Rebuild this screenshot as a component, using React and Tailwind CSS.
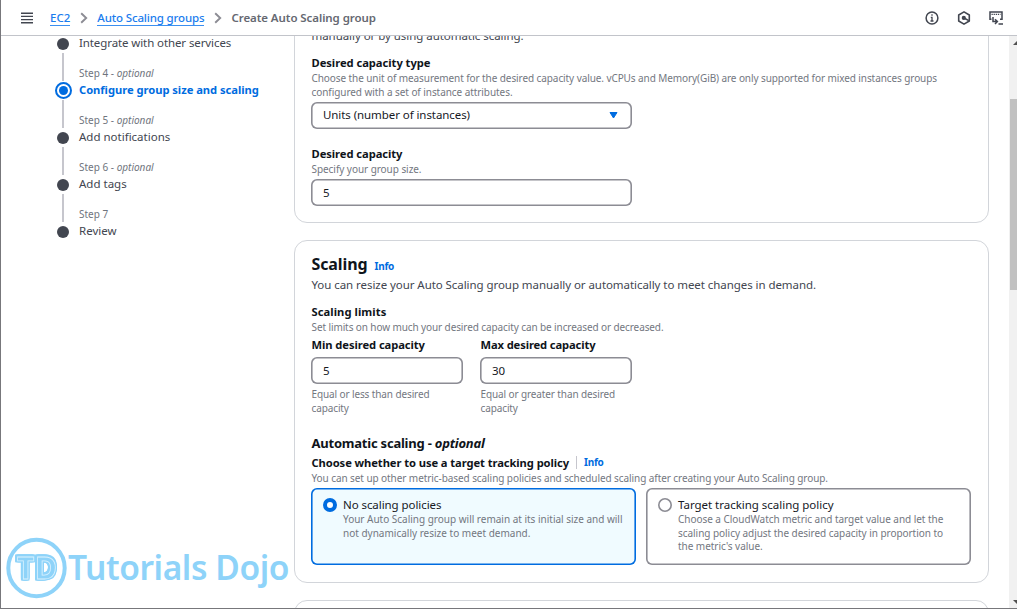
const strong = "text-[11.2px] font-bold leading-[17px] whitespace-nowrap text-[#0f141a]";
const body = "text-[11.5px] leading-[17px] whitespace-nowrap";
const hint = "text-[10px] leading-[14px] whitespace-nowrap text-[#73777f]";
const field =
  "-ml-[0.5px] flex h-[27px] items-center rounded-[6px] shadow-[inset_0_0_0_1.6px_#8c8c94] bg-white px-[12px] text-[11.5px] tracking-[-0.075px] text-[#16191f]";
const card = "rounded-[13px] border border-[#d2d5da] bg-white";

function Chevron() {
  return (
    <svg className="h-[12px] w-[8px]" viewBox="0 0 8 12" fill="none" stroke="#8c8c94" strokeWidth="1.9">
      <path d="M1.2 1.2 6.2 6l-5 4.8" />
    </svg>
  );
}

function Header() {
  return (
    <header className="flex h-[36px] shrink-0 items-center border-b border-[#c2c4ca] bg-white pr-[14px] pl-[20px]">
      <svg className="h-[12px] w-[12px]" viewBox="0 0 12 12" stroke="#424650" strokeWidth="1.4">
        <path d="M0 1.2h12M0 4.4h12M0 7.6h12M0 10.8h12" />
      </svg>
      <nav className="ml-[17px] flex items-center text-[11.5px] leading-[15px] whitespace-nowrap">
        <a className="border-b border-[#3b8ff0] font-medium text-[#1a7cee]">EC2</a>
        <span className="mr-[9px] ml-[10px]"><Chevron /></span>
        <a className="border-b border-[#3b8ff0] font-medium tracking-[-0.15px] text-[#1a7cee]">Auto Scaling groups</a>
        <span className="mr-[9px] ml-[10px]"><Chevron /></span>
        <span className="font-semibold tracking-[-0.07px] text-[#656871]">Create Auto Scaling group</span>
      </nav>
      <div className="ml-auto flex items-center gap-[18px]">
        <svg className="h-[14px] w-[14px]" viewBox="0 0 14 14" fill="none" stroke="#424650" strokeWidth="1.5">
          <circle cx="7" cy="7" r="5.9" />
          <path d="M7 3.3v1.5M5.8 6.4H7v3.4M5.5 10h3" strokeWidth="1.3" />
        </svg>
        <svg className="h-[14px] w-[14px]" viewBox="0 0 14 14" fill="none" stroke="#424650" strokeWidth="1.6">
          <path d="M7 .9 12.3 4v6L7 13.1 1.7 10V4z" strokeLinejoin="round" />
          <circle cx="6.8" cy="6.9" r="1.3" fill="#424650" />
          <path d="m7.5 7.3 4.3 2.3" />
        </svg>
        <svg className="h-[14px] w-[14px]" viewBox="0 0 14 14" fill="none" stroke="#424650" strokeWidth="1.5">
          <path d="M2.5 8.3H1V1h12v7.3h-2" />
          <path d="M2.5 3.4h9" strokeDasharray="1.3 .8" strokeWidth="1.2" />
          <path d="M4 6v4.6h4M6 8.2l2.4 2.4L6 13M9.5 13H14" />
        </svg>
      </div>
    </header>
  );
}

function Step({ label, optional, title, active, last, titleClass }) {
  return (
    <li className="flex h-[47px] gap-[6.5px]">
      <div className="flex w-[19px] shrink-0 flex-col items-center">
        <span className="h-[15px] w-[1.5px] bg-[#c6c6cd]" />
        <span className="flex h-[19px] w-[19px] items-center justify-center">
          {active ? (
            <span className="flex h-[17px] w-[17px] items-center justify-center rounded-full border-2 border-[#006ce0]">
              <span className="h-[9px] w-[9px] rounded-full bg-[#006ce0]" />
            </span>
          ) : (
            <span className="h-[12px] w-[12px] rounded-full bg-[#424650]" />
          )}
        </span>
        {!last && <span className="w-[1.5px] flex-1 bg-[#c6c6cd]" />}
      </div>
      <div>
        <div className="text-[10px] leading-[14px] whitespace-nowrap text-[#6f747d]">
          {label}
          {optional && <> - <em>optional</em></>}
        </div>
        <div className={"mt-[1px] leading-[17px] whitespace-nowrap " + titleClass + (active ? " text-[11.2px] font-bold text-[#006ce0]" : " text-[11.5px] text-[#424650]")}>
          {title}
        </div>
      </div>
    </li>
  );
}

function Steps() {
  return (
    <ol className="-mt-[17px] w-[240px] pl-[52.5px]">
      <Step label="Step 3" optional title="Integrate with other services" titleClass="tracking-[-0.1px]" />
      <Step label="Step 4" optional title="Configure group size and scaling" active titleClass="tracking-[-0.04px]" />
      <Step label="Step 5" optional title="Add notifications" titleClass="tracking-normal" />
      <Step label="Step 6" optional title="Add tags" titleClass="tracking-normal" />
      <Step label="Step 7" title="Review" last titleClass="tracking-normal" />
    </ol>
  );
}

function GroupSizeCard() {
  return (
    <section className={card + " -mt-[15px] px-[16.5px] pt-[5px] pb-[16px]"}>
      <p className={body + " tracking-[-0.05px] text-[#424650]"}>manually or by using automatic scaling.</p>
      <h3 className={strong + " mt-[10px] tracking-[-0.04px]"}>Desired capacity type</h3>
      <p className={hint + " tracking-[-0.087px]"}>
        Choose the unit of measurement for the desired capacity value. vCPUs and Memory(GiB) are only supported for mixed instances groups
      </p>
      <p className={hint + " tracking-[-0.068px]"}>configured with a set of instance attributes.</p>
      <div className={field + " mt-[3px] w-[321px] justify-between pb-[2px]"}>
        Units (number of instances)
        <svg className="mr-[2px] h-[7px] w-[9px] translate-y-px" viewBox="0 0 9 7">
          <path d="M1 .5h7L4.5 6z" fill="#006ce0" stroke="#006ce0" strokeLinejoin="round" />
        </svg>
      </div>
      <h3 className={strong + " mt-[16px] tracking-[-0.06px]"}>Desired capacity</h3>
      <p className={hint + " tracking-[-0.055px]"}>Specify your group size.</p>
      <div className={field + " mt-[3px] w-[321px]"}>5</div>
    </section>
  );
}

function Limit({ label, labelClass, value, lines }) {
  return (
    <div className="w-[152px]">
      <h4 className={strong + " " + labelClass}>{label}</h4>
      <div className={field + " mt-[4px] w-[152px]"}>{value}</div>
      <p className={hint + " mt-[3px] tracking-[-0.113px]"}>
        {lines[0]}
        <br />
        {lines[1]}
      </p>
    </div>
  );
}

function Tile({ title, titleClass, selected, children }) {
  return (
    <div
      className={
        "flex h-[77px] w-[325px] gap-[6.5px] rounded-[6px] pt-[8px] pl-[11.5px] " +
        (selected ? "bg-[#f0fbff] shadow-[inset_0_0_0_1.6px_#006ce0]" : "bg-white shadow-[inset_0_0_0_1.6px_#8c8c94]")
      }
    >
      <span
        className={
          "mt-[1.5px] h-[14px] w-[14px] shrink-0 rounded-full bg-white " +
          (selected ? "border-[4px] border-[#006ce0]" : "shadow-[inset_0_0_0_1.6px_#8c8c94]")
        }
      />
      <div>
        <div className={body + " text-[#16191f] " + titleClass}>{title}</div>
        <div className="text-[10px] leading-[13.6px] whitespace-nowrap text-[#73777f]">{children}</div>
      </div>
    </div>
  );
}

function ScalingCard() {
  return (
    <section className={card + " mt-[17px] px-[16.5px] pt-[13px] pb-[17px]"}>
      <div className="flex h-[22px] items-baseline gap-[7px] leading-[21px]">
        <h2 className="text-[16px] font-bold tracking-[-0.1px] text-[#0f141a]">Scaling</h2>
        <a className="text-[10px] font-bold tracking-[-0.25px] text-[#006ce0]">Info</a>
      </div>
      <p className={body + " tracking-[-0.062px] text-[#424650]"}>
        You can resize your Auto Scaling group manually or automatically to meet changes in demand.
      </p>
      <h3 className={strong + " mt-[10px] tracking-[0.06px]"}>Scaling limits</h3>
      <p className={hint + " tracking-[-0.101px]"}>
        Set limits on how much your desired capacity can be increased or decreased.
      </p>
      <div className="mt-[2px] flex gap-[17px]">
        <Limit label="Min desired capacity" labelClass="tracking-[-0.07px]" value="5" lines={["Equal or less than desired", "capacity"]} />
        <Limit label="Max desired capacity" labelClass="tracking-[-0.12px]" value="30" lines={["Equal or greater than desired", "capacity"]} />
      </div>
      <h3 className="mt-[19px] text-[13px] leading-[19px] font-bold tracking-[-0.22px] whitespace-nowrap text-[#0f141a]">
        Automatic scaling - <em>optional</em>
      </h3>
      <div className="mt-[1px] mb-[1px] flex h-[16px] items-center">
        <h4 className={strong + " tracking-[-0.08px]"}>Choose whether to use a target tracking policy</h4>
        <span className="mr-[7px] ml-[7px] h-[13px] w-px bg-[#c6c6cd]" />
        <a className="text-[10px] font-bold tracking-[-0.25px] text-[#006ce0]">Info</a>
      </div>
      <p className={hint + " tracking-[-0.076px]"}>
        You can set up other metric-based scaling policies and scheduled scaling after creating your Auto Scaling group.
      </p>
      <div className="mt-[3px] -ml-[0.5px] flex gap-[10px]">
        <Tile title="No scaling policies" titleClass="tracking-[-0.07px]" selected>
          <p className="tracking-[-0.012px]">Your Auto Scaling group will remain at its initial size and will</p>
          <p>not dynamically resize to meet demand.</p>
        </Tile>
        <Tile title="Target tracking scaling policy" titleClass="tracking-[-0.02px]">
          <p className="tracking-[-0.043px]">Choose a CloudWatch metric and target value and let the</p>
          <p className="tracking-[-0.043px]">scaling policy adjust the desired capacity in proportion to</p>
          <p className="tracking-[-0.043px]">the metric's value.</p>
        </Tile>
      </div>
    </section>
  );
}

function Scrollbar() {
  return (
    <div className="flex w-[8px] shrink-0 flex-col items-end overflow-hidden bg-[#f1f1f1]">
      <svg className="mt-[5px] h-[4px] w-[4px] shrink-0" viewBox="0 0 4 4"><path d="M0 4 4 0v4z" fill="#505050" /></svg>
      <div className="mt-[54px] h-[191px] w-[7px] shrink-0 bg-[#c1c1c1]" />
      <svg className="mt-auto mb-[4px] h-[4px] w-[4px] shrink-0" viewBox="0 0 4 4"><path d="M0 0h4v4z" fill="#505050" /></svg>
    </div>
  );
}

function Watermark() {
  return (
    <div className="absolute bottom-[8px] left-[3px] flex items-center">
      <svg className="h-[64px] w-[64px]" viewBox="0 0 64 64">
        <circle cx="32.5" cy="32" r="28.2" fill="none" stroke="#8ed3f9" strokeWidth="4" />
        <text
          x="13"
          y="42.5"
          textLength="40"
          className="fill-[#8ed3f9] stroke-[#d9f1fe] stroke-[0.8px] font-['Noto_Sans',sans-serif] text-[30px] font-bold [filter:drop-shadow(1.4px_0_0_#8ed3f9)_drop-shadow(-1.4px_0_0_#8ed3f9)_drop-shadow(0_1.4px_0_#8ed3f9)_drop-shadow(0_-1.4px_0_#8ed3f9)]"
        >
          TD
        </text>
      </svg>
      <span className="-mt-[2px] text-[33.5px] leading-[48px] font-semibold tracking-[-0.4px] whitespace-nowrap text-[#8ed3f9]">Tutorials Dojo</span>
    </div>
  );
}

export default function App() {
  return (
    <div className="relative flex h-[609px] w-[1017px] flex-col overflow-hidden border-b border-l border-[#77777b] bg-white font-['Noto_Sans',sans-serif]">
      <Header />
      <div className="flex min-h-0 flex-1 overflow-hidden">
        <Steps />
        <main className="ml-[53px] w-[695px]">
          <GroupSizeCard />
          <ScalingCard />
          <section className={card + " mt-[17px] h-[60px]"} />
        </main>
        <div className="ml-auto flex"><Scrollbar /></div>
      </div>
      <Watermark />
    </div>
  );
}
